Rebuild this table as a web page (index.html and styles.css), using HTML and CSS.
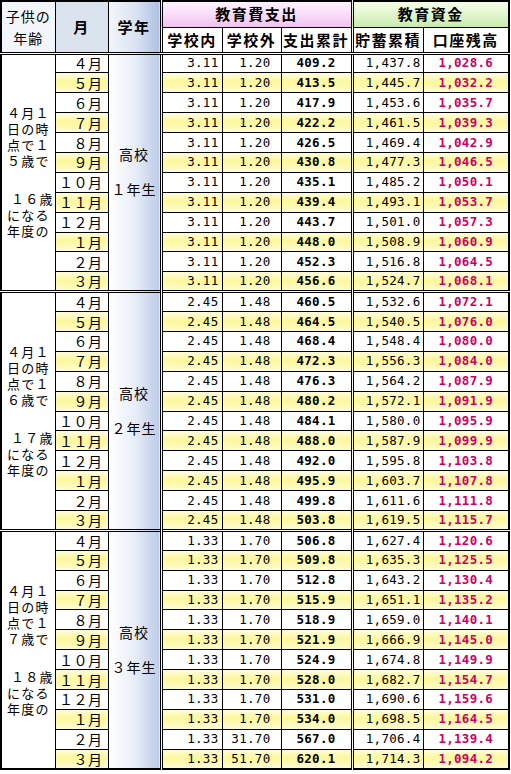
FILE: index.html
```html
<!DOCTYPE html>
<html lang="ja">
<head>
<meta charset="utf-8">
<title>教育資金</title>
<link rel="stylesheet" href="styles.css">
</head>
<body>
<table class="sheet">
<colgroup>
<col class="c-age"><col class="c-mon"><col class="c-grade"><col class="c-in"><col class="c-out"><col class="c-sum"><col class="c-sav"><col class="c-bal">
</colgroup>
<thead>
<tr class="h1">
<th rowspan="2" class="h-age">子供の<br>年齢</th>
<th rowspan="2" class="h-mon">月</th>
<th rowspan="2" class="h-grade">学年</th>
<th colspan="3" class="h-exp dl">教育費支出</th>
<th colspan="2" class="h-fund dl">教育資金</th>
</tr>
<tr class="h2">
<th class="dl">学校内</th><th>学校外</th><th>支出累計</th><th class="dl">貯蓄累積</th><th>口座残高</th>
</tr>
</thead>
<tbody>
<tr class="g">
<td rowspan="12" class="age"><span class="p">４月１<br>日の時<br>点で１<br>５歳で</span><span class="p p2"><span class="ind">１６歳</span><br>になる<br>年度の</span></td>
<td class="mon">４月</td>
<td rowspan="12" class="grade">高校<br><br>１年生</td>
<td class="n in dl">3.11</td><td class="n out">1.20</td><td class="n sum">409.2</td><td class="n sav dl">1,437.8</td><td class="n bal">1,028.6</td></tr>
<tr class="y"><td class="mon">５月</td><td class="n in dl">3.11</td><td class="n out">1.20</td><td class="n sum">413.5</td><td class="n sav dl">1,445.7</td><td class="n bal">1,032.2</td></tr>
<tr><td class="mon">６月</td><td class="n in dl">3.11</td><td class="n out">1.20</td><td class="n sum">417.9</td><td class="n sav dl">1,453.6</td><td class="n bal">1,035.7</td></tr>
<tr class="y"><td class="mon">７月</td><td class="n in dl">3.11</td><td class="n out">1.20</td><td class="n sum">422.2</td><td class="n sav dl">1,461.5</td><td class="n bal">1,039.3</td></tr>
<tr><td class="mon">８月</td><td class="n in dl">3.11</td><td class="n out">1.20</td><td class="n sum">426.5</td><td class="n sav dl">1,469.4</td><td class="n bal">1,042.9</td></tr>
<tr class="y"><td class="mon">９月</td><td class="n in dl">3.11</td><td class="n out">1.20</td><td class="n sum">430.8</td><td class="n sav dl">1,477.3</td><td class="n bal">1,046.5</td></tr>
<tr><td class="mon">１０月</td><td class="n in dl">3.11</td><td class="n out">1.20</td><td class="n sum">435.1</td><td class="n sav dl">1,485.2</td><td class="n bal">1,050.1</td></tr>
<tr class="y"><td class="mon">１１月</td><td class="n in dl">3.11</td><td class="n out">1.20</td><td class="n sum">439.4</td><td class="n sav dl">1,493.1</td><td class="n bal">1,053.7</td></tr>
<tr><td class="mon">１２月</td><td class="n in dl">3.11</td><td class="n out">1.20</td><td class="n sum">443.7</td><td class="n sav dl">1,501.0</td><td class="n bal">1,057.3</td></tr>
<tr class="y"><td class="mon">１月</td><td class="n in dl">3.11</td><td class="n out">1.20</td><td class="n sum">448.0</td><td class="n sav dl">1,508.9</td><td class="n bal">1,060.9</td></tr>
<tr><td class="mon">２月</td><td class="n in dl">3.11</td><td class="n out">1.20</td><td class="n sum">452.3</td><td class="n sav dl">1,516.8</td><td class="n bal">1,064.5</td></tr>
<tr class="y"><td class="mon">３月</td><td class="n in dl">3.11</td><td class="n out">1.20</td><td class="n sum">456.6</td><td class="n sav dl">1,524.7</td><td class="n bal">1,068.1</td></tr>

<tr class="g">
<td rowspan="12" class="age"><span class="p">４月１<br>日の時<br>点で１<br>６歳で</span><span class="p p2"><span class="ind">１７歳</span><br>になる<br>年度の</span></td>
<td class="mon">４月</td>
<td rowspan="12" class="grade">高校<br><br>２年生</td>
<td class="n in dl">2.45</td><td class="n out">1.48</td><td class="n sum">460.5</td><td class="n sav dl">1,532.6</td><td class="n bal">1,072.1</td></tr>
<tr class="y"><td class="mon">５月</td><td class="n in dl">2.45</td><td class="n out">1.48</td><td class="n sum">464.5</td><td class="n sav dl">1,540.5</td><td class="n bal">1,076.0</td></tr>
<tr><td class="mon">６月</td><td class="n in dl">2.45</td><td class="n out">1.48</td><td class="n sum">468.4</td><td class="n sav dl">1,548.4</td><td class="n bal">1,080.0</td></tr>
<tr class="y"><td class="mon">７月</td><td class="n in dl">2.45</td><td class="n out">1.48</td><td class="n sum">472.3</td><td class="n sav dl">1,556.3</td><td class="n bal">1,084.0</td></tr>
<tr><td class="mon">８月</td><td class="n in dl">2.45</td><td class="n out">1.48</td><td class="n sum">476.3</td><td class="n sav dl">1,564.2</td><td class="n bal">1,087.9</td></tr>
<tr class="y"><td class="mon">９月</td><td class="n in dl">2.45</td><td class="n out">1.48</td><td class="n sum">480.2</td><td class="n sav dl">1,572.1</td><td class="n bal">1,091.9</td></tr>
<tr><td class="mon">１０月</td><td class="n in dl">2.45</td><td class="n out">1.48</td><td class="n sum">484.1</td><td class="n sav dl">1,580.0</td><td class="n bal">1,095.9</td></tr>
<tr class="y"><td class="mon">１１月</td><td class="n in dl">2.45</td><td class="n out">1.48</td><td class="n sum">488.0</td><td class="n sav dl">1,587.9</td><td class="n bal">1,099.9</td></tr>
<tr><td class="mon">１２月</td><td class="n in dl">2.45</td><td class="n out">1.48</td><td class="n sum">492.0</td><td class="n sav dl">1,595.8</td><td class="n bal">1,103.8</td></tr>
<tr class="y"><td class="mon">１月</td><td class="n in dl">2.45</td><td class="n out">1.48</td><td class="n sum">495.9</td><td class="n sav dl">1,603.7</td><td class="n bal">1,107.8</td></tr>
<tr><td class="mon">２月</td><td class="n in dl">2.45</td><td class="n out">1.48</td><td class="n sum">499.8</td><td class="n sav dl">1,611.6</td><td class="n bal">1,111.8</td></tr>
<tr class="y"><td class="mon">３月</td><td class="n in dl">2.45</td><td class="n out">1.48</td><td class="n sum">503.8</td><td class="n sav dl">1,619.5</td><td class="n bal">1,115.7</td></tr>

<tr class="g">
<td rowspan="12" class="age"><span class="p">４月１<br>日の時<br>点で１<br>７歳で</span><span class="p p2"><span class="ind">１８歳</span><br>になる<br>年度の</span></td>
<td class="mon">４月</td>
<td rowspan="12" class="grade">高校<br><br>３年生</td>
<td class="n in dl">1.33</td><td class="n out">1.70</td><td class="n sum">506.8</td><td class="n sav dl">1,627.4</td><td class="n bal">1,120.6</td></tr>
<tr class="y"><td class="mon">５月</td><td class="n in dl">1.33</td><td class="n out">1.70</td><td class="n sum">509.8</td><td class="n sav dl">1,635.3</td><td class="n bal">1,125.5</td></tr>
<tr><td class="mon">６月</td><td class="n in dl">1.33</td><td class="n out">1.70</td><td class="n sum">512.8</td><td class="n sav dl">1,643.2</td><td class="n bal">1,130.4</td></tr>
<tr class="y"><td class="mon">７月</td><td class="n in dl">1.33</td><td class="n out">1.70</td><td class="n sum">515.9</td><td class="n sav dl">1,651.1</td><td class="n bal">1,135.2</td></tr>
<tr><td class="mon">８月</td><td class="n in dl">1.33</td><td class="n out">1.70</td><td class="n sum">518.9</td><td class="n sav dl">1,659.0</td><td class="n bal">1,140.1</td></tr>
<tr class="y"><td class="mon">９月</td><td class="n in dl">1.33</td><td class="n out">1.70</td><td class="n sum">521.9</td><td class="n sav dl">1,666.9</td><td class="n bal">1,145.0</td></tr>
<tr><td class="mon">１０月</td><td class="n in dl">1.33</td><td class="n out">1.70</td><td class="n sum">524.9</td><td class="n sav dl">1,674.8</td><td class="n bal">1,149.9</td></tr>
<tr class="y"><td class="mon">１１月</td><td class="n in dl">1.33</td><td class="n out">1.70</td><td class="n sum">528.0</td><td class="n sav dl">1,682.7</td><td class="n bal">1,154.7</td></tr>
<tr><td class="mon">１２月</td><td class="n in dl">1.33</td><td class="n out">1.70</td><td class="n sum">531.0</td><td class="n sav dl">1,690.6</td><td class="n bal">1,159.6</td></tr>
<tr class="y"><td class="mon">１月</td><td class="n in dl">1.33</td><td class="n out">1.70</td><td class="n sum">534.0</td><td class="n sav dl">1,698.5</td><td class="n bal">1,164.5</td></tr>
<tr><td class="mon">２月</td><td class="n in dl">1.33</td><td class="n out">31.70</td><td class="n sum">567.0</td><td class="n sav dl">1,706.4</td><td class="n bal">1,139.4</td></tr>
<tr class="y"><td class="mon">３月</td><td class="n in dl">1.33</td><td class="n out">51.70</td><td class="n sum">620.1</td><td class="n sav dl">1,714.3</td><td class="n bal">1,094.2</td></tr>
</tbody>
</table>
</body>
</html>
```

FILE: styles.css
```css
html, body {
  margin: 0;
  padding: 0;
  background: #ffffff;
}

body {
  font-family: "Noto Sans CJK JP", "Noto Sans", sans-serif;
  color: #000;
}

.sheet {
  border-collapse: collapse;
  table-layout: fixed;
  width: 510px;
  border: 2px solid #000;
}

.c-age { width: 54px; }
.c-mon { width: 53px; }
.c-grade { width: 53px; }
.c-in { width: 61px; }
.c-out { width: 59px; }
.c-sum { width: 71px; }
.c-sav { width: 71px; }
.c-bal { width: 86px; }

.sheet th,
.sheet td {
  border: 1px solid #000;
  padding: 0;
  vertical-align: middle;
}

.sheet .dl {
  border-left: 3px double #000;
}

/* header */
.sheet th {
  font-size: 15px;
  font-weight: 700;
  letter-spacing: 1.5px;
  line-height: 18px;
  text-align: center;
  background: #ffffff;
  white-space: nowrap;
}

.h1 { height: 26px; }
.h2 { height: 26px; }

.h2 th,
.h1 th[rowspan] {
  border-bottom: 3px double #000;
}

.sheet th.h-age {
  font-size: 14px;
  font-weight: 400;
  line-height: 22px;
  letter-spacing: 1px;
  background: #f2f5fa;
}

.sheet th.h-mon {
  background: #dbe3ee;
}

.sheet th.h-grade {
  background: linear-gradient(to right, #f2f5fb 0%, #d9e2f2 55%, #aebfe0 100%);
}

.sheet th.h-exp {
  background: linear-gradient(to bottom, #fff2ff 0%, #f9def9 45%, #efc2ef 100%);
}

.sheet th.h-fund {
  background: linear-gradient(to bottom, #f4ffe8 0%, #e2f6cf 45%, #c9eaae 100%);
}

/* body */
tbody tr { height: 19.9px; }

tbody tr.g td {
  border-top: 3px double #000;
}

.age {
  font-size: 13px;
  letter-spacing: 1.2px;
  line-height: 16px;
  text-align: left;
  padding-left: 5px !important;
  background: #ffffff;
}

.age .p {
  display: block;
  white-space: nowrap;
}

.age .p2 {
  margin-top: 22px;
}

.age .ind {
  padding-left: 4px;
}

.grade {
  font-size: 14px;
  letter-spacing: 1px;
  line-height: 17.5px;
  text-align: center;
  background: linear-gradient(to right, #ffffff 0%, #e9eef8 50%, #bccbe7 100%);
}

.mon {
  font-size: 14px;
  letter-spacing: 0.5px;
  line-height: 16px;
  text-align: right;
  padding-right: 5px !important;
  white-space: nowrap;
}

.n {
  font-family: "DejaVu Sans Mono", "Liberation Mono", monospace;
  font-size: 12.5px;
  letter-spacing: 0.3px;
  line-height: 16px;
  white-space: nowrap;
}

.in { text-align: right; padding-right: 3px !important; }
.out { text-align: right; padding-right: 10px !important; }
.sum { text-align: center; font-weight: 700; }
.sav { text-align: right; padding-right: 2px !important; }
.bal { text-align: center; font-weight: 700; color: #cc0066; }

tr.y td {
  background: linear-gradient(to bottom, #fffde0 0%, #fdf79a 45%, #fffbd2 100%);
}
```
